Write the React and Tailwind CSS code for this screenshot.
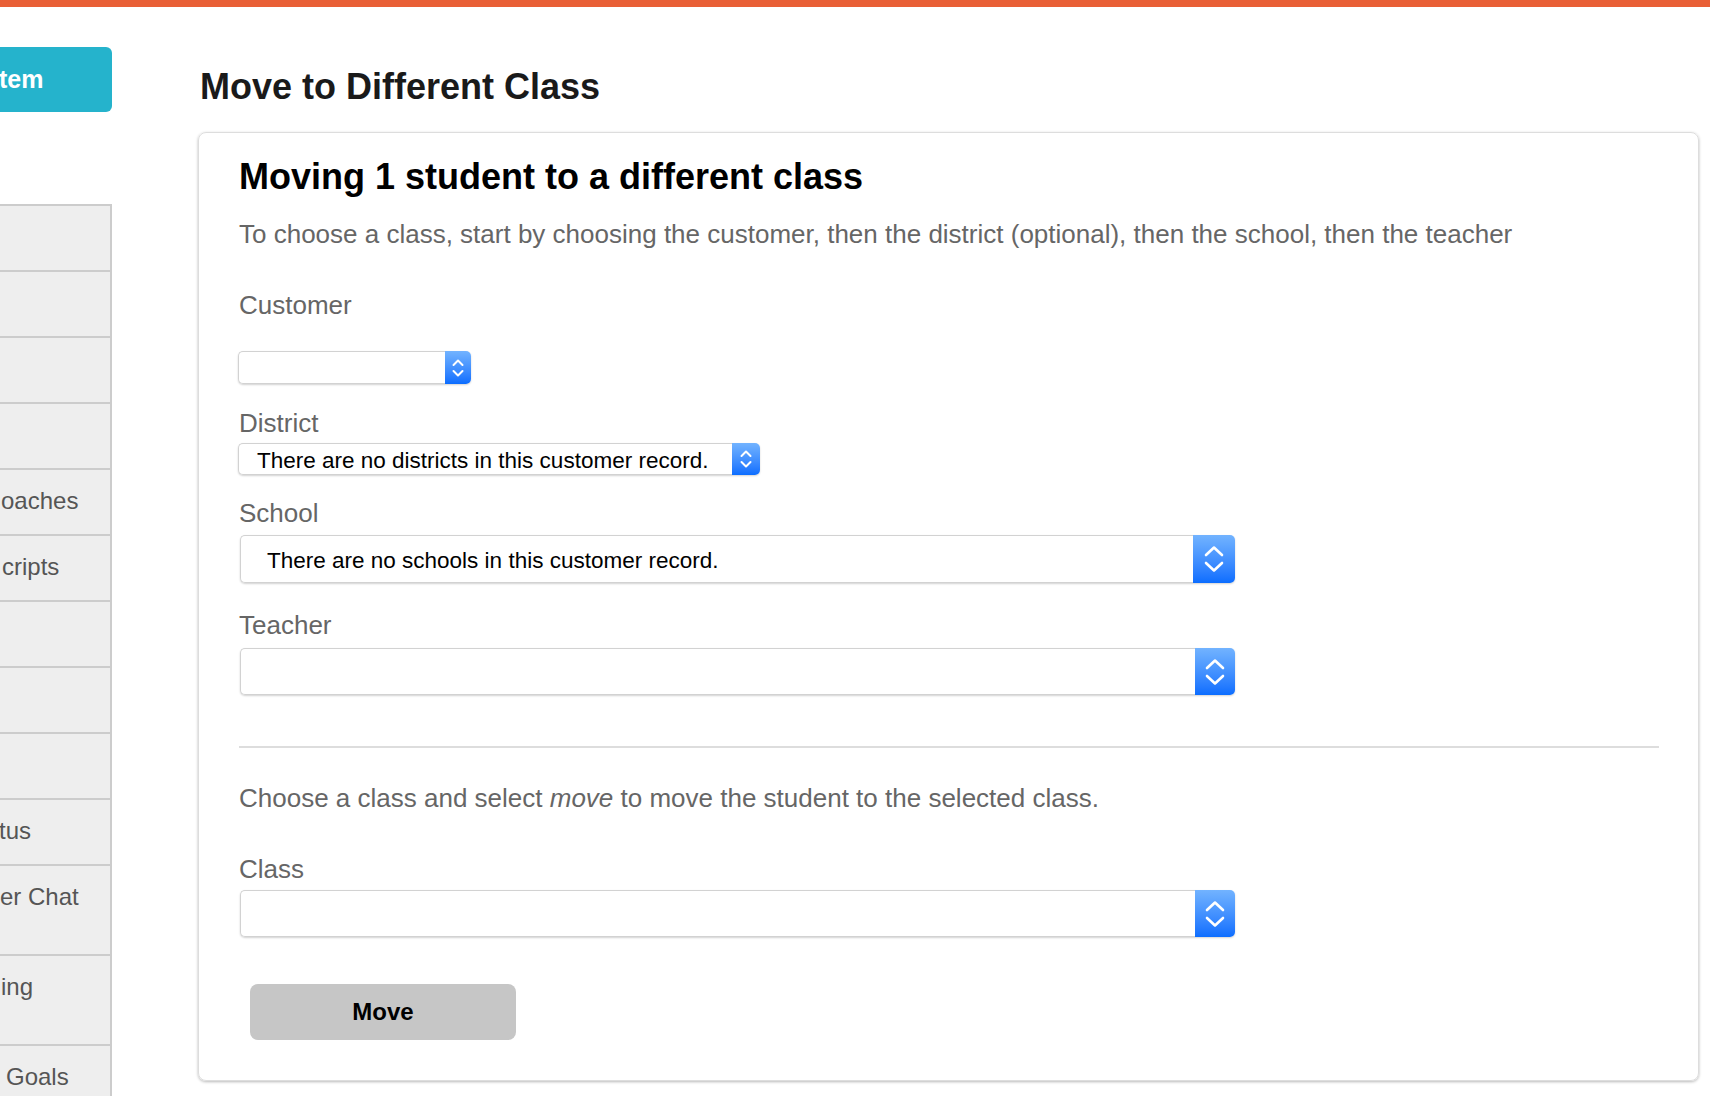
import React from 'react'

const sideRows = [
  { text: '' },
  { text: '' },
  { text: '' },
  { text: '' },
  { text: 'oaches', ml: 'ml-[1px]' },
  { text: 'cripts', ml: 'ml-[2px]' },
  { text: '' },
  { text: '' },
  { text: '' },
  { text: 'tus', ml: 'ml-[-1px]' },
  { text: 'er Chat', ml: 'ml-0', tall: true },
  { text: 'ing', ml: 'ml-[1px]', tall: true },
  { text: 'Goals', ml: 'ml-[6px]' },
]

function Chevrons({ big }) {
  if (big) {
    return (
      <svg width="20" height="28" viewBox="0 0 20 28" fill="none" stroke="white" strokeWidth="2.6" strokeLinecap="round" strokeLinejoin="round">
        <polyline points="2,10 10,2.5 18,10" />
        <polyline points="2,18 10,25.5 18,18" />
      </svg>
    )
  }
  return (
    <svg width="12" height="20" viewBox="0 0 12 20" fill="none" stroke="white" strokeWidth="2" strokeLinecap="round" strokeLinejoin="round">
      <polyline points="1.5,7 6,2.5 10.5,7" />
      <polyline points="1.5,13 6,17.5 10.5,13" />
    </svg>
  )
}

function Select({ width, height, btn, big, text, textPad }) {
  return (
    <div className={`flex rounded-[5px] shadow-[0_1px_2px_rgba(0,0,0,0.18)] ${width} ${height}`}>
      <div className={`flex-1 flex items-center pt-[3px] bg-white border border-r-0 border-[#d2d2d2] rounded-l-[5px] text-[22.5px] text-black whitespace-nowrap ${textPad}`}>
        {text}
      </div>
      <div className={`${btn} flex items-center justify-center rounded-r-[5px] bg-gradient-to-b from-[#72b3ff] to-[#0a6dff]`}>
        <Chevrons big={big} />
      </div>
    </div>
  )
}

function Label({ children, className }) {
  return <div className={`text-[26px] leading-[32px] text-[#666] ${className}`}>{children}</div>
}

export default function App() {
  return (
    <div className="h-[1096px] overflow-hidden bg-white font-['Liberation_Sans',Arial,sans-serif]">
      <div className="h-[7px] bg-[#e95f36]" />
      <div className="flex">
        <aside className="w-[112px] shrink-0 overflow-hidden">
          <div className="mt-[40px] h-[65px] rounded-r-[6px] bg-[#25b3cc] flex items-center text-white font-bold text-[25px]">
            <span className="ml-[-1px]">tem</span>
          </div>
          <div className="mt-[92px] border-r-2 border-[#cccccc] bg-[#eeeeee]">
            {sideRows.map((r, i) => (
              <div
                key={i}
                className={`border-t-2 border-[#cccccc] overflow-hidden whitespace-nowrap pt-[17px] text-[24px] leading-[28px] text-[#555] ${r.tall ? 'h-[90px]' : 'h-[66px]'}`}
              >
                {r.text && <span className={`inline-block ${r.ml}`}>{r.text}</span>}
              </div>
            ))}
          </div>
        </aside>

        <main className="flex-1 pl-[86px] pr-[11px]">
          <h1 className="mt-[58px] ml-[2px] text-[36px] leading-[44px] font-bold text-[#1a1a1a]">
            Move to Different Class
          </h1>

          <div className="mt-[23px] border border-[#dddddd] rounded-[8px] shadow-[0_1px_3px_rgba(0,0,0,0.28)] pl-[40px] pr-[39px] pt-[22px] pb-[40px]">
            <h2 className="text-[36px] leading-[44px] font-bold text-black">
              Moving 1 student to a different class
            </h2>
            <p className="mt-[19px] text-[26px] leading-[32px] text-[#666]">
              To choose a class, start by choosing the customer, then the district (optional), then the school, then the teacher
            </p>

            <Label className="mt-[39px]">Customer</Label>
            <div className="mt-[30px] ml-[-1px]">
              <Select width="w-[233px]" height="h-[33px]" btn="w-[26px]" textPad="pl-[18px]" />
            </div>

            <Label className="mt-[23px]">District</Label>
            <div className="mt-[4px] ml-[-1px]">
              <Select
                width="w-[522px]"
                height="h-[32px]"
                btn="w-[28px]"
                textPad="pl-[18px]"
                text="There are no districts in this customer record."
              />
            </div>

            <Label className="mt-[22px]">School</Label>
            <div className="mt-[6px] ml-[1px]">
              <Select
                width="w-[995px]"
                height="h-[48px]"
                btn="w-[42px]"
                big
                textPad="pl-[26px]"
                text="There are no schools in this customer record."
              />
            </div>

            <Label className="mt-[26px]">Teacher</Label>
            <div className="mt-[7px] ml-[1px]">
              <Select width="w-[995px]" height="h-[47px]" btn="w-[40px]" big textPad="pl-[26px]" />
            </div>

            <div className="mt-[51px] h-[2px] bg-[#dddddd]" />

            <p className="mt-[34px] text-[26px] leading-[32px] text-[#666]">
              Choose a class and select <em>move</em> to move the student to the selected class.
            </p>

            <Label className="mt-[39px]">Class</Label>
            <div className="mt-[5px] ml-[1px]">
              <Select width="w-[995px]" height="h-[47px]" btn="w-[40px]" big textPad="pl-[26px]" />
            </div>

            <button className="mt-[47px] ml-[11px] w-[266px] h-[56px] rounded-[8px] bg-[#c6c6c6] text-[24px] font-bold text-black">
              Move
            </button>
          </div>
        </main>
      </div>
    </div>
  )
}
